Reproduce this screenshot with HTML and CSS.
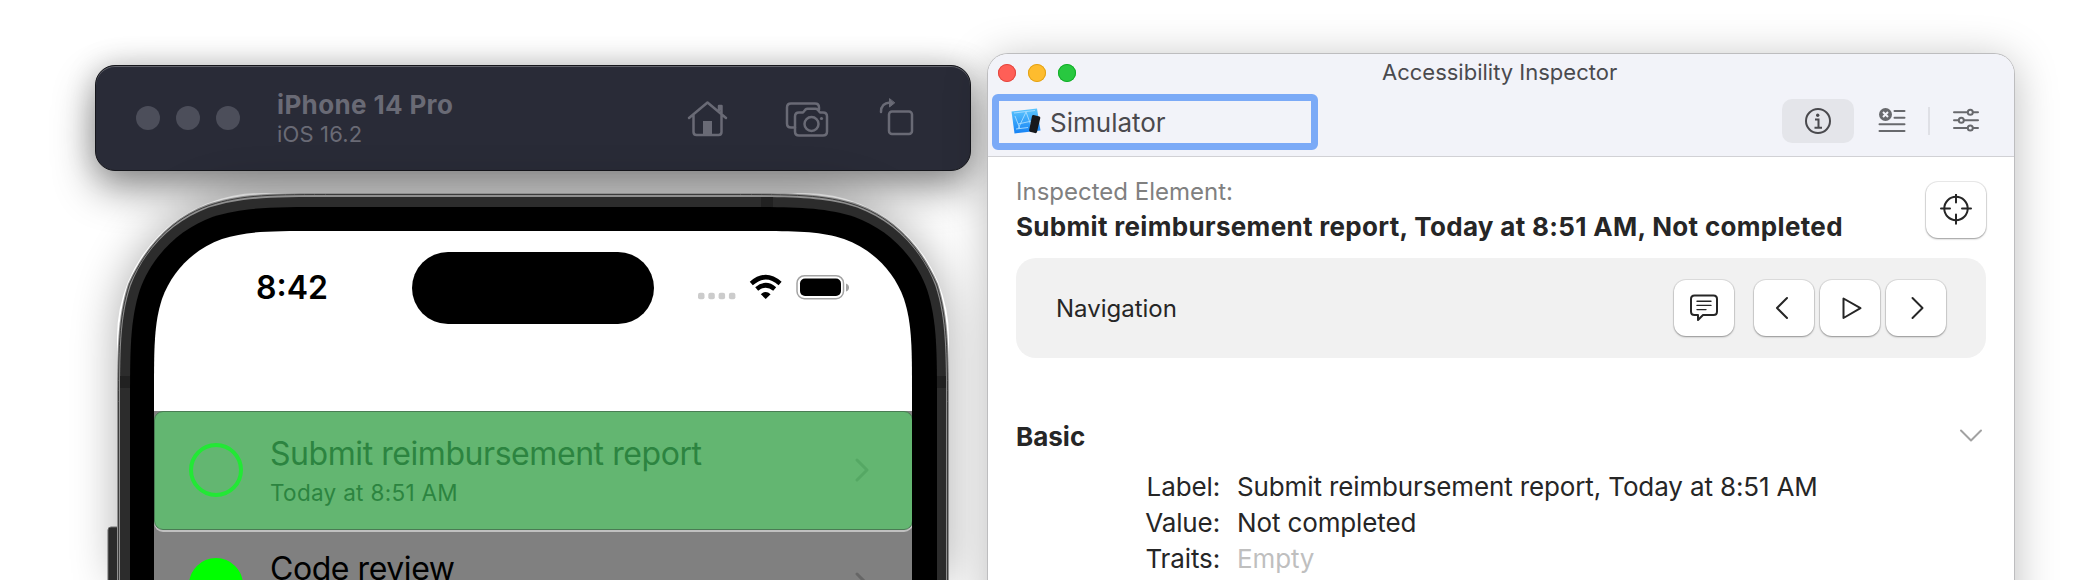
FILE: index.html
```html
<!DOCTYPE html>
<html lang="en">
<head>
<meta charset="utf-8">
<title>Accessibility Inspector</title>
<link rel="stylesheet" href="styles.css">
</head>
<body>
<main class="desktop">
  <section class="simulator">
    <header class="sim-bar">
      <div class="sim-dots"><i></i><i></i><i></i></div>
      <div class="sim-titles">
        <div class="sim-name"><span>iPhone 14 Pro</span></div>
        <div class="sim-os"><span>iOS 16.2</span></div>
      </div>
      <svg class="sim-icons" width="230" height="44" viewBox="686 93 230 44" fill="none" stroke="#696a75" stroke-width="2.5" stroke-linecap="round" stroke-linejoin="round">
        <path d="M689 115 707.500 99.500 726 115M693.500 112v17q0 3 3 3h22q3 0 3-3v-17M719 107v-4h2.500v7"/>
        <path d="M703 118h9v14h-9z" fill="#696a75" stroke="none"/>
        <path d="M795 124.500h-4q-4 0-4-4v-16q0-4 4-4h24q4 0 4 4v2"/>
        <path d="M799 109.500h4l2.500-3q.8-.8 2-.8h8q1.200 0 2 .8l2.500 3h3q4 0 4 4v15q0 4-4 4h-24q-4 0-4-4v-15q0-4 4-4z"/>
        <circle cx="811.500" cy="121" r="7"/><circle cx="821.500" cy="115.500" r="1.600" fill="#696a75" stroke="none"/>
        <rect x="889" y="108.500" width="23" height="22.500" rx="3"/>
        <path d="M881 109q0-9 9-9.500h1"/><path d="M889.500 96v8l5-4z" fill="#696a75" stroke-width="1"/>
      </svg>
    </header>
    <div class="phone">
      <svg class="phone-frame" width="860" height="400" viewBox="100 180 860 400" aria-hidden="true">
        <path d="M108 600v-70q0-3 3-3h8v73z" fill="#2a2a2a" stroke="#6a6a6a"/>
        <path fill="#8f8f8f" d="M117 700V413C117 350 117 318 128 284C144.500 247 171 217.300 208 204C242 193 273 193 337 193H729C793 193 825 193 858 204C895 217.300 922 247 938 284C949 318 949 350 949 413V700Z"/>
        <path fill="none" stroke="#3c3c3c" d="M118.500 700V413C118.500 350 118.500 318 129.500 284C146 247 172 218.500 209 205.500C242 194.500 273 194.500 337 194.500H729C793 194.500 825 194.500 857 205.500C894 218.500 920 247 936.500 284C947.500 318 947.500 350 947.500 413V700"/>
        <path fill="#2c2c2c" d="M120 700V412C120 350 120 319 130.600 286C144 249.600 172.600 221 209 207.600C242 197 273 197 335 197H731C793 197 824 197 857 207.600C893.400 221 922 249.600 935.400 286C946 319 946 350 946 412V700Z"/>
        <path d="M761 197h12v11h-12zM120 376h11v12h-11zM936 376h10v12h-10z" fill="#212121"/>
        <path fill="#000" d="M130 700V407C130 350 130 321 139.800 290C152 256 179 229 213 216.800C244 207 273 207 330 207H737C794 207 823 207 854 216.800C888 229 915 256 927.200 290C937 321 937 350 937 407V700Z"/>
      </svg>
      <div class="screen">
        <div class="status">
          <div class="time"><span>8:42</span></div>
          <div class="island"></div>
          <svg class="status-icons" width="154" height="28" viewBox="697 273 154 28">
            <g fill="#ccc"><rect x="698" y="292.700" width="6.500" height="6.500" rx="2"/><rect x="708.300" y="292.700" width="6.500" height="6.500" rx="2"/><rect x="718.600" y="292.700" width="6.500" height="6.500" rx="2"/><rect x="728.900" y="292.700" width="6.500" height="6.500" rx="2"/></g>
            <g fill="none" stroke="#000" stroke-width="4.600"><path d="M751.300 283.500Q765.700 270.800 780.100 283.500"/><path d="M756.700 289Q765.700 281.500 774.700 289"/></g>
            <path d="M760.800 294.200Q765.700 290 770.600 294.200L765.700 299z"/>
            <rect x="797" y="275.700" width="46.500" height="23" rx="7.500" fill="none" stroke="#a3a3a3" stroke-width="1.500"/>
            <rect x="800" y="278.500" width="41" height="17.500" rx="5"/>
            <path d="M846 283.500q3 1 3 4t-3 4z" fill="#a3a3a3"/>
          </svg>
        </div>
        <div class="row selected">
          <i class="check"></i>
          <div class="row-text"><div class="row-title"><span>Submit reimbursement report</span></div><div class="row-sub"><span>Today at 8:51 AM</span></div></div>
          <svg class="chev" width="16" height="26" viewBox="0 0 16 26"><path d="M3 3 13 13 3 23"/></svg>
        </div>
        <div class="row">
          <i class="check done"></i>
          <div class="row-text"><div class="row-title"><span>Code review</span></div></div>
          <svg class="chev" width="16" height="26" viewBox="0 0 16 26"><path d="M3 3 13 13 3 23"/></svg>
        </div>
      </div>
    </div>
  </section>

  <section class="inspector">
    <header class="head">
      <div class="titlebar">
        <div class="lights"><i class="red"></i><i class="yellow"></i><i class="green"></i></div>
        <div class="win-title"><span>Accessibility Inspector</span></div>
      </div>
      <div class="toolbar">
        <div class="target-field">
          <svg width="32" height="30" viewBox="1010 109 32 30">
            <defs><linearGradient id="blue" x1="0" y1="0" x2="0" y2="1"><stop offset="0" stop-color="#5cc6fd"/><stop offset="1" stop-color="#1682f5"/></linearGradient></defs>
            <path d="M1011.500 113.500 1037 110.500 1040.500 132.500 1014.500 135.500z" fill="url(#blue)"/>
            <path d="M1018 131 1026 114 1032 130M1018 126l14-3M1014 115l21-2.500M1016 131l12-1.500M1015 118l5 13" fill="none" stroke="#a9ddff" stroke-width=".9"/>
            <path d="M1033.500 117 1039.500 118.500Q1040.500 119 1040.300 120L1037 134Q1036.500 135.500 1035 135L1030 133.700Q1029 133.300 1029.200 132L1032 118Q1032.500 116.800 1033.500 117z" fill="#17181b"/>
          </svg>
          <span>Simulator</span>
        </div>
        <div class="tabs">
          <div class="tab on"><svg width="30" height="30" viewBox="1803 105 30 30" fill="none" stroke="#49494d" stroke-width="2"><circle cx="1818" cy="120" r="12"/><circle cx="1817.700" cy="114.300" r="1.700" fill="#49494d" stroke="none"/><path d="M1815 118.600h3.500v8M1814.500 126.800h7.500"/></svg></div>
          <svg width="28" height="28" viewBox="1878 106 28 28" fill="none" stroke="#68696d" stroke-width="2"><circle cx="1885.500" cy="113.500" r="6.500" fill="#68696d" stroke="none"/><path d="M1883 111l5 5M1888 111l-5 5" stroke="#f2f3f9"/><path d="M1894.500 110h10M1894.500 116.700h10M1879.500 123.300h25M1879.500 130h25" stroke-linecap="round"/></svg>
          <i class="sep"></i>
          <svg width="28" height="28" viewBox="1952 107 28 28" fill="#f2f3f9" stroke="#68696d" stroke-width="2"><path d="M1954 112.300h24M1954 120.200h24M1954 128h24" stroke-linecap="round"/><circle cx="1970.300" cy="112.300" r="2.500"/><circle cx="1961.300" cy="120.200" r="2.500"/><circle cx="1970.300" cy="128" r="2.500"/></svg>
        </div>
      </div>
    </header>
    <div class="element">
      <div>
        <div class="caption"><span>Inspected Element:</span></div>
        <div class="elem-name"><span>Submit reimbursement report, Today at 8:51 AM, Not completed</span></div>
      </div>
      <div class="btn"><svg width="32" height="32" viewBox="-16 -14.500 32 32"><circle r="11.700"/><path d="M0-14.200V-6M0 15.300V6M-15 0H-6M15 0H6"/></svg></div>
    </div>
    <div class="nav">
      <div class="nav-label"><span>Navigation</span></div>
      <div class="btn speak"><svg width="30" height="30" viewBox="1689 293 30 30"><path d="M1694.500 295.500h19q3.500 0 3.500 3.500v12.500q0 3.500-3.500 3.500h-10.500l-5 5v-5h-3.500q-3.500 0-3.500-3.500v-12.500q0-3.500 3.500-3.500z"/><path d="M1697 301.200h14M1697 305.400h14M1697 309.600h9" stroke-width="1.400"/></svg></div>
      <div class="btn"><svg width="30" height="30" viewBox="1769 292 30 30"><path d="M1787 297 1777 307 1787 317"/></svg></div>
      <div class="btn"><svg width="30" height="30" viewBox="1835 292 30 30"><path d="M1843.500 297.500V317L1860.500 307.200z"/></svg></div>
      <div class="btn"><svg width="30" height="30" viewBox="1901 292 30 30"><path d="M1912.500 297 1922.500 307 1912.500 317"/></svg></div>
    </div>
    <div class="group"><div class="group-name"><span>Basic</span></div>
      <svg width="26" height="18" viewBox="1958 429 26 18" fill="none" stroke="#a2a2a2" stroke-width="2" stroke-linecap="round" stroke-linejoin="round"><path d="M1961 432.500 1971 442.500 1981 432.500"/></svg>
    </div>
    <dl class="props">
      <dt><span>Label:</span></dt><dd><span>Submit reimbursement report, Today at 8:51 AM</span></dd>
      <dt><span>Value:</span></dt><dd><span>Not completed</span></dd>
      <dt><span>Traits:</span></dt><dd class="empty"><span>Empty</span></dd>
    </dl>
  </section>
</main>
</body>
</html>
```
FILE: styles.css
```css
* { box-sizing: border-box; }
body { margin: 0; background: #fff; font-family: Inter, "Liberation Sans", sans-serif; color: #262626; }
.desktop { display: flex; width: 2094px; height: 580px; overflow: hidden; align-items: flex-start; }
.simulator { width: 876px; margin: 65px 0 0 95px; flex: none; }
.sim-bar { position: relative; z-index: 1; display: flex; align-items: center; height: 106px; padding: 0 54px 0 40px; border-radius: 20px; background: #292b37; border: 1px solid #15161b; box-shadow: inset 0 1px 0 #62636b, 0 18px 42px rgba(0,0,0,.42), 0 0 30px rgba(0,0,0,.18); }
.sim-dots { display: flex; gap: 16px; }
.sim-dots i { width: 24px; height: 24px; border-radius: 50%; background: #4c4e5a; }
.sim-titles { margin-left: 37px; white-space: nowrap; color: #696a75; }
.sim-name { font-size: 26px; line-height: 32px; font-weight: 700; letter-spacing: .36px; }
.sim-os { font-size: 22px; line-height: 26px; letter-spacing: .15px; }
.sim-icons { margin-left: auto; }
.phone { position: relative; z-index: 2; margin: 22px 0 0 22px; width: 832px; height: 387px; padding: 38px 0 0 37px; border-radius: 144px 144px 0 0; box-shadow: 0 0 46px rgba(0,0,0,.32); }
.phone-frame { position: absolute; left: -17px; top: -13px; }
.screen { position: relative; width: 758px; height: 349px; background: #fff; clip-path: path("M0 400V164C0 116 0 93 8 68C18 40 40 18 68 8C93 0 116 0 164 0H594C642 0 665 0 690 8C718 18 740 40 750 68C758 93 758 116 758 164V400Z"); }
.status { display: flex; height: 180px; padding-top: 21px; align-items: flex-start; }
.time { width: 258px; padding-left: 102px; font-size: 32px; line-height: 38px; margin-top: 17px; font-weight: 600; color: #000; }
.island { width: 242px; height: 72px; border-radius: 36px; background: #000; }
.status-icons { margin: 21px 0 0 43px; }
.row { display: flex; width: 759px; height: 119px; padding: 0 43px 0 35px; background: #808080; color: #000; }
.selected { background: #63b671; border: 1px solid #4a7c54; border-radius: 9px; padding: 0 42px 0 34px; box-shadow: 0 2px 0 0 #c0c0c0, 0 0 0 12px #808080; clip-path: inset(0 0 -12px 0); color: #2c8440; }
.check { width: 54px; height: 54px; margin-top: 31px; border: 4.500px solid #22e835; border-radius: 50%; }
.check.done { background: #0f0; border-color: #0f0; margin-top: 28px; }
.row-text { margin-left: 27px; white-space: nowrap; }
.row-title { font-size: 32px; line-height: 40px; margin-top: 22px; letter-spacing: -.44px; }
.row + .row .row-title { margin-top: 19px; }
.row-sub { font-size: 22.500px; line-height: 30px; margin-top: 4px; letter-spacing: .31px; }
.chev { margin: 45px 0 0 auto; fill: none; stroke: #666; stroke-width: 3; stroke-linecap: round; stroke-linejoin: round; }
.row + .row .chev { margin-top: 41px; }
.selected .chev { stroke: #55a864; }
.inspector { position: relative; z-index: 3; flex: none; width: 1026px; height: 600px; margin: 54px 0 0 17px; border-radius: 20px 20px 0 0; background: #fff; box-shadow: 0 0 0 1px #bdbdbf, 0 6px 44px rgba(0,0,0,.27); }
.head { height: 103px; background: #f2f3f9; border-bottom: 1px solid #d1d1d5; border-radius: 20px 20px 0 0; color: #4a4a4e; }
.titlebar { display: flex; height: 40px; padding: 10px 0 0 10px; }
.lights { display: flex; gap: 12px; width: 384px; }
.lights i { width: 18px; height: 18px; border-radius: 50%; }
.red { background: #ff5f57; box-shadow: inset 0 0 0 1px #e2463f; }
.yellow { background: #febc2e; box-shadow: inset 0 0 0 1px #e1a116; }
.green { background: #28c840; box-shadow: inset 0 0 0 1px #12ac28; }
.win-title { font-size: 22px; line-height: 28px; margin-top: -6px; }
.toolbar { display: flex; justify-content: space-between; padding: 0 34px 0 4px; }
.target-field { display: flex; width: 326px; height: 56px; align-items: center; border: 7px solid #7baaf7; border-radius: 6px; padding-left: 11px; gap: 8px; font-size: 26px; }
.tabs { display: flex; align-items: center; height: 44px; margin-top: 5px; }
.tab { display: grid; place-items: center; width: 72px; height: 44px; margin-right: 24px; border-radius: 10px; background: #e4e5ea; }
.sep { width: 2px; height: 28px; margin: 0 22px 0 22px; background: #dfe0e6; }
.element { display: flex; justify-content: space-between; padding: 25px 28px 0 28px; white-space: nowrap; height: 101px; }
.caption { color: #808080; font-size: 24px; line-height: 30px; margin-top: -5px; }
.elem-name { font-size: 26px; line-height: 32px; margin-top: 4px; font-weight: 700; letter-spacing: .32px; }
.btn { display: grid; place-items: center; flex: none; width: 60px; height: 56px; border-radius: 12px; background: #fff; box-shadow: 0 0 0 1px rgba(0,0,0,.08), 0 1px 2px rgba(0,0,0,.35); }
.btn svg { fill: none; stroke: #262626; stroke-width: 2; stroke-linecap: round; stroke-linejoin: round; }
.nav { display: flex; align-items: center; gap: 6px; width: 970px; height: 100px; margin-left: 28px; padding: 0 40px; border-radius: 20px; background: #f1f1f1; }
.nav-label { margin-right: auto; font-size: 24px; }
.speak { margin-right: 14px; }
.group { display: flex; justify-content: space-between; align-items: center; height: 36px; margin: 60px 30px 0 28px; }
.group-name { font-size: 26px; font-weight: 700; }
.props { display: grid; grid-template-columns: 204px 1fr; column-gap: 17px; margin: 15px 0 0 28px; font-size: 26px; line-height: 36px; letter-spacing: -.13px; }
.props dt { text-align: right; }
.props dd { margin: 0; }
.empty { color: #bfbfbf; }
```
